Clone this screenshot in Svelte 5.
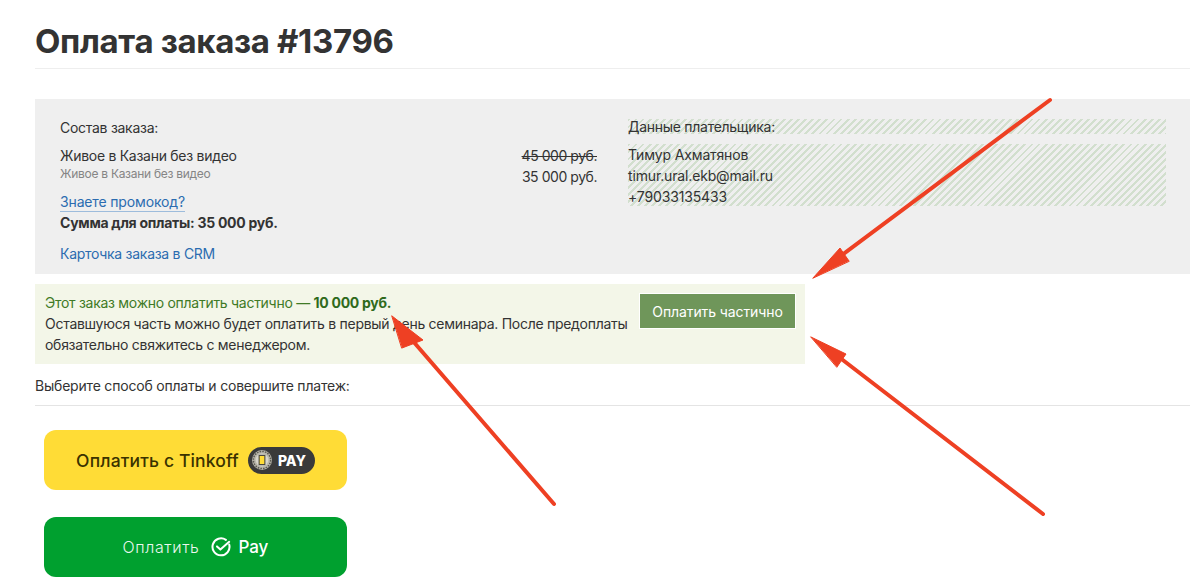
<script>
  const hatch = ['Тимур Ахматянов', 'timur.ural.ekb@mail.ru', '+79033135433'];
</script>

<div class="page">
  <h1>Оплата заказа #13796</h1>

  <section class="order">
    <div class="col-main">
      <div class="label">Состав заказа:</div>
      <div class="item">Живое в Казани без видео</div>
      <div class="sub">Живое в Казани без видео</div>
      <a class="promo" href="#promo">Знаете промокод?</a>
      <div class="sum">Сумма для оплаты: 35 000 руб.</div>
      <a class="crm" href="#crm">Карточка заказа в CRM</a>
    </div>
    <div class="col-price">
      <s>45 000 руб.</s>
      <span>35 000 руб.</span>
    </div>
    <div class="col-payer">
      <div class="hatch head">Данные плательщика:</div>
      <div class="hatch lines">
        {#each hatch as line}<div>{line}</div>{/each}
      </div>
    </div>
  </section>

  <section class="partial">
    <div class="partial-text">
      <div class="accent">Этот заказ можно оплатить частично — <b>10 000 руб.</b></div>
      <div>Оставшуюся часть можно будет оплатить в первый день семинара. После предоплаты обязательно свяжитесь с менеджером.</div>
    </div>
    <button class="btn-partial">Оплатить частично</button>
  </section>

  <p class="choose">Выберите способ оплаты и совершите платеж:</p>

  <div class="pay-list">
    <button class="pay tinkoff">
      <span>Оплатить с Tinkoff</span>
      <span class="pill">
        <svg width="24" height="24" viewBox="0 0 24 24" aria-hidden="true">
          <circle cx="12" cy="12" r="10" fill="#b9b7ac" />
          <circle cx="12" cy="12" r="8.6" fill="none" stroke="#5c5a52" stroke-width="1.5" stroke-dasharray="1.6 1.1" />
          <circle cx="12" cy="12" r="6.4" fill="#d8d6ca" />
          <rect x="8.6" y="6.8" width="6.8" height="10.4" fill="#4a4840" />
          <rect x="9.7" y="8" width="4.6" height="8" fill="#ffdc36" />
        </svg>
        <b>PAY</b>
      </span>
    </button>
    <button class="pay sber">
      <span class="sber-text">Оплатить</span>
      <svg class="sber-icon" width="21" height="20" viewBox="0 0 21 20" aria-hidden="true">
        <path d="M18.2 7.6A8.5 8.5 0 1 1 14.9 2.9" fill="none" stroke="#fff" stroke-width="2" stroke-linecap="round" />
        <path d="M6 9.4l3.4 3.2 8.8-7.8" fill="none" stroke="#fff" stroke-width="2" stroke-linecap="round" stroke-linejoin="round" />
      </svg>
      <b>Pay</b>
    </button>
  </div>

  <svg class="arrows" width="1200" height="587" viewBox="0 0 1200 587" aria-hidden="true">
    <g fill="#ee4023" stroke="#ee4023" stroke-linecap="round" stroke-linejoin="round">
      <path d="M1050 100L838 258" fill="none" stroke-width="4" />
      <path d="M813 278L840 248L849 261Z" stroke-width="1" />
      <path d="M554 504L412 340" fill="none" stroke-width="4" />
      <path d="M392 316L423 340L402 348Z" stroke-width="1" />
      <path d="M1043 514L835 354" fill="none" stroke-width="4" />
      <path d="M811 337L846 354L837 367Z" stroke-width="1" />
    </g>
  </svg>
</div>

<style>
  :global(body) {
    margin: 0;
    background: #fff;
  }
  .page {
    position: relative;
    box-sizing: border-box;
    width: 1200px;
    height: 587px;
    padding: 0 10px 0 35px;
    overflow: hidden;
    font-family: Inter, "Noto Sans", sans-serif;
    font-size: 14px;
    line-height: 21px;
    letter-spacing: -0.28px;
    color: #333;
  }
  h1 {
    margin: 0;
    height: 68px;
    border-bottom: 1px solid #eee;
    font-size: 33px;
    line-height: 82px;
    font-weight: 700;
    letter-spacing: -0.35px;
    color: #333;
  }
  .order {
    display: grid;
    grid-template-columns: 1fr 84px 538px;
    column-gap: 31px;
    box-sizing: border-box;
    height: 175px;
    margin-top: 30px;
    padding: 18px 24px 0 25px;
    background: #efefef;
  }
  .item {
    margin-top: 7px;
  }
  .sub {
    font-size: 12px;
    line-height: 16px;
    color: #858585;
  }
  .promo {
    display: inline-block;
    margin-top: 10px;
    color: #2b6cb0;
    line-height: 19px;
    letter-spacing: -0.15px;
    text-decoration: none;
    border-bottom: 1px solid #9dbcdc;
  }
  .sum {
    font-weight: 700;
    line-height: 21px;
  }
  .crm {
    display: block;
    margin-top: 10px;
    color: #2b6cb0;
    text-decoration: none;
  }
  .col-price {
    display: flex;
    flex-direction: column;
    align-items: flex-end;
    padding-top: 28px;
    white-space: nowrap;
    letter-spacing: -0.45px;
  }
  .hatch {
    background: repeating-linear-gradient(135deg, #d2dfce 0 2px, #efefef 2px 5px);
  }
  .head {
    height: 15px;
    margin-top: 2px;
    line-height: 15px;
  }
  .lines {
    height: 62px;
    margin-top: 10px;
    letter-spacing: -0.15px;
  }
  .partial {
    display: flex;
    justify-content: space-between;
    box-sizing: border-box;
    width: 770px;
    height: 80px;
    margin-top: 10px;
    padding: 8px 9px 0 10px;
    background: #f3f6e8;
  }
  .partial-text {
    width: 592px;
  }
  .accent {
    color: #3f7a26;
  }
  .accent b {
    color: #2f6a1c;
  }
  .btn-partial {
    width: 157px;
    height: 36px;
    margin-top: 1px;
    padding: 0;
    border: 1px solid #fff;
    background: #6f965a;
    color: #fff;
    font: inherit;
    letter-spacing: -0.1px;
  }
  .choose {
    margin: 11px 0 0;
    height: 30px;
    border-bottom: 1px solid #e4e4e4;
    letter-spacing: -0.2px;
  }
  .pay-list {
    display: flex;
    flex-direction: column;
    gap: 27px;
    width: 303px;
    margin: 24px 0 0 9px;
  }
  .pay {
    display: flex;
    align-items: center;
    justify-content: center;
    height: 60px;
    padding: 0;
    border: 0;
    border-radius: 12px;
    font-family: inherit;
  }
  .tinkoff {
    gap: 9px;
    background: #ffdc36;
    color: #3a3200;
    font-size: 17.5px;
    font-weight: 500;
    letter-spacing: 0.15px;
  }
  .pill {
    display: inline-flex;
    align-items: center;
    gap: 4px;
    box-sizing: border-box;
    width: 67px;
    height: 27px;
    padding-left: 2px;
    border-radius: 14px;
    background: #3a3a3a;
    color: #fff;
    font-size: 14px;
    letter-spacing: 0;
  }
  .pill b {
    font-weight: 800;
  }
  .sber {
    background: #00a02f;
    color: #fff;
    font-size: 16px;
  }
  .sber-text {
    font-weight: 300;
    letter-spacing: 0.6px;
    opacity: 0.92;
  }
  .sber-icon {
    margin: 0 6px 0 12px;
  }
  .sber b {
    font-weight: 500;
    font-size: 17px;
    letter-spacing: 0;
  }
  .arrows {
    position: absolute;
    left: 0;
    top: 0;
    pointer-events: none;
  }
</style>
